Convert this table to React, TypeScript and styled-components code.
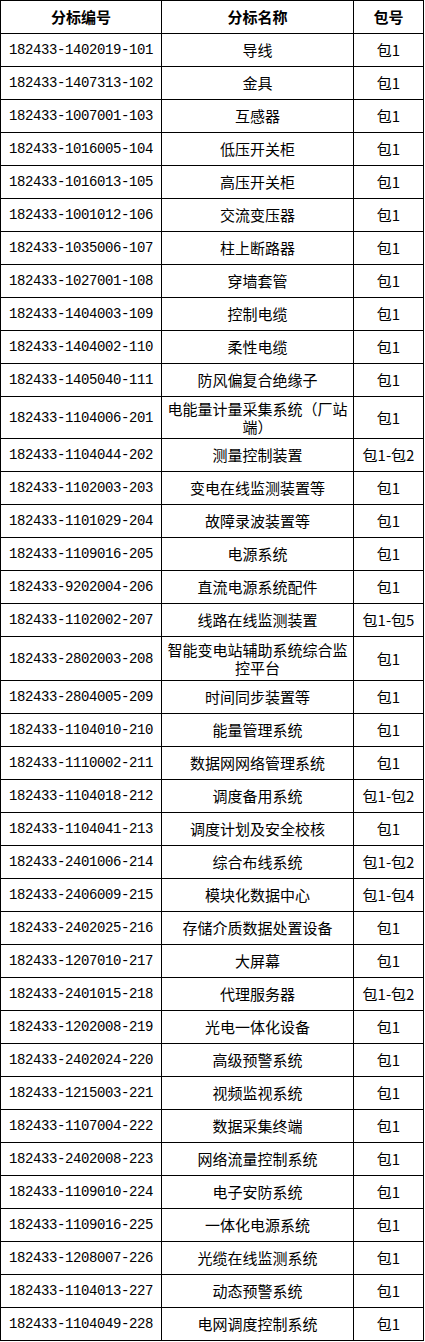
import React from "react";
import styled, { createGlobalStyle } from "styled-components";

const GlobalStyle = createGlobalStyle`
  body {
    margin: 0;
    background-color: #fff;
  }
`;

const Table = styled.div`
  display: grid;
  grid-template-columns: 160px 191px 69px;
  gap: 1px;
  width: 422px;
  padding: 1px;
  background-color: #000;
  color: #000;
  font-family: "Noto Sans CJK SC", sans-serif;
`;

const Cell = styled.div<{ $height?: number }>`
  display: flex;
  align-items: center;
  justify-content: center;
  min-height: ${(p) => p.$height ?? 32}px;
  padding: 0 4px;
  background-color: #fff;
  font-size: 15px;
  line-height: 18px;
  text-align: center;
`;

const HeaderCell = styled(Cell)`
  font-weight: bold;
`;

const CodeCell = styled(Cell)`
  justify-content: flex-start;
  padding: 0 0 0 8px;
  font-family: "Liberation Mono", monospace;
  font-size: 14px;
  letter-spacing: -0.4px;
`;

interface Lot {
  code : string;
  name : string;
  pack : string;
  height? : number;
}

const lots : Lot[] = [
  { code: "182433-1402019-101", name: "导线", pack: "包1" },
  { code: "182433-1407313-102", name: "金具", pack: "包1" },
  { code: "182433-1007001-103", name: "互感器", pack: "包1" },
  { code: "182433-1016005-104", name: "低压开关柜", pack: "包1" },
  { code: "182433-1016013-105", name: "高压开关柜", pack: "包1" },
  { code: "182433-1001012-106", name: "交流变压器", pack: "包1" },
  { code: "182433-1035006-107", name: "柱上断路器", pack: "包1" },
  { code: "182433-1027001-108", name: "穿墙套管", pack: "包1" },
  { code: "182433-1404003-109", name: "控制电缆", pack: "包1" },
  { code: "182433-1404002-110", name: "柔性电缆", pack: "包1" },
  { code: "182433-1405040-111", name: "防风偏复合绝缘子", pack: "包1" },
  { code: "182433-1104006-201", name: "电能量计量采集系统（厂站端）", pack: "包1", height: 41 },
  { code: "182433-1104044-202", name: "测量控制装置", pack: "包1-包2" },
  { code: "182433-1102003-203", name: "变电在线监测装置等", pack: "包1" },
  { code: "182433-1101029-204", name: "故障录波装置等", pack: "包1" },
  { code: "182433-1109016-205", name: "电源系统", pack: "包1" },
  { code: "182433-9202004-206", name: "直流电源系统配件", pack: "包1" },
  { code: "182433-1102002-207", name: "线路在线监测装置", pack: "包1-包5" },
  { code: "182433-2802003-208", name: "智能变电站辅助系统综合监控平台", pack: "包1", height: 43 },
  { code: "182433-2804005-209", name: "时间同步装置等", pack: "包1" },
  { code: "182433-1104010-210", name: "能量管理系统", pack: "包1" },
  { code: "182433-1110002-211", name: "数据网网络管理系统", pack: "包1" },
  { code: "182433-1104018-212", name: "调度备用系统", pack: "包1-包2" },
  { code: "182433-1104041-213", name: "调度计划及安全校核", pack: "包1" },
  { code: "182433-2401006-214", name: "综合布线系统", pack: "包1-包2" },
  { code: "182433-2406009-215", name: "模块化数据中心", pack: "包1-包4" },
  { code: "182433-2402025-216", name: "存储介质数据处置设备", pack: "包1" },
  { code: "182433-1207010-217", name: "大屏幕", pack: "包1" },
  { code: "182433-2401015-218", name: "代理服务器", pack: "包1-包2" },
  { code: "182433-1202008-219", name: "光电一体化设备", pack: "包1" },
  { code: "182433-2402024-220", name: "高级预警系统", pack: "包1" },
  { code: "182433-1215003-221", name: "视频监视系统", pack: "包1" },
  { code: "182433-1107004-222", name: "数据采集终端", pack: "包1" },
  { code: "182433-2402008-223", name: "网络流量控制系统", pack: "包1" },
  { code: "182433-1109010-224", name: "电子安防系统", pack: "包1" },
  { code: "182433-1109016-225", name: "一体化电源系统", pack: "包1" },
  { code: "182433-1208007-226", name: "光缆在线监测系统", pack: "包1" },
  { code: "182433-1104013-227", name: "动态预警系统", pack: "包1" },
  { code: "182433-1104049-228", name: "电网调度控制系统", pack: "包1" },
];

export default function App() : JSX.Element {
  return (
    <>
      <GlobalStyle />
      <Table>
        <HeaderCell>分标编号</HeaderCell>
        <HeaderCell>分标名称</HeaderCell>
        <HeaderCell>包号</HeaderCell>

        {lots.map((lot) => (
          <React.Fragment key={lot.code}>
            <CodeCell $height={lot.height}>{lot.code}</CodeCell>
            <Cell $height={lot.height}>{lot.name}</Cell>
            <Cell $height={lot.height}>{lot.pack}</Cell>
          </React.Fragment>
        ))}
      </Table>
    </>
  );
}
